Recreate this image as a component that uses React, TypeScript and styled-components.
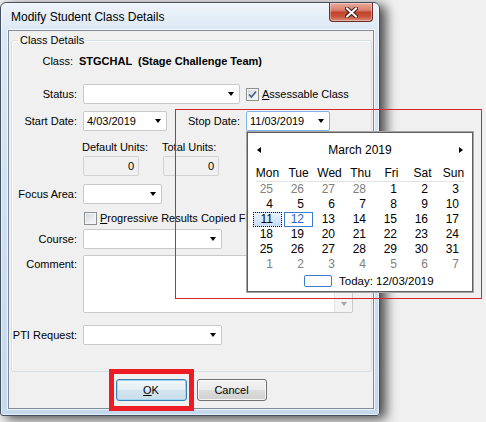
import styled, { createGlobalStyle } from "styled-components";

const GlobalStyle = createGlobalStyle`
  html, body {
    margin: 0;
    padding: 0;
  }
  body {
    width: 486px;
    height: 422px;
    overflow: hidden;
    background: #f0f0f0;
    font-family: "Liberation Sans", Arial, sans-serif;
    font-size: 11px;
    color: #000;
  }
`;

const Desktop = styled.div`
  position: relative;
  width: 486px;
  height: 422px;
  padding-top: 2px;
  box-sizing: border-box;
  overflow: hidden;
  background: #f0f0f0;
`;

const Window = styled.div`
  box-sizing: border-box;
  width: 380px;
  height: 414px;
  display: flex;
  flex-direction: column;
  border: 1px solid #44505e;
  border-radius: 6px 6px 3px 3px;
  background: linear-gradient(180deg, #eef4fa 0%, #dbe7f4 7%, #c5d9ee 100%);
  box-shadow: inset 0 0 0 1px rgba(255, 255, 255, 0.55), 6px 3px 12px rgba(0, 0, 0, 0.7);
`;

const TitleBar = styled.div`
  height: 27px;
  flex: 0 0 27px;
  display: flex;
  justify-content: space-between;
  align-items: flex-start;
`;

const Title = styled.span`
  padding: 6px 0 0 10px;
  line-height: 16px;
  font-size: 12px;
  color: #000;
`;

const CloseButton = styled.div`
  box-sizing: border-box;
  width: 44px;
  height: 19px;
  margin-right: 6px;
  display: flex;
  align-items: center;
  justify-content: center;
  border: 1px solid #6b2e24;
  border-top: none;
  border-radius: 0 0 4px 4px;
  background: linear-gradient(180deg, #e9aa9d 0%, #d8806e 40%, #c2432b 52%, #c8533b 75%, #de8d78 100%);
  box-shadow: inset 0 0 0 1px rgba(255, 255, 255, 0.35);
`;

const Client = styled.div`
  flex: 1;
  margin: 0 5px 6px 7px;
  display: flex;
  flex-direction: column;
  border: 1px solid #7f8c9b;
  background: #f0f0f0;
  box-shadow: 0 0 0 1px rgba(255, 255, 255, 0.7);
`;

const Group = styled.fieldset`
  margin: 2px 1px 0 2px;
  padding: 0 0 26px 0;
  border: 1px solid #d5dfe5;
  border-radius: 3px;
  box-shadow: inset 1px 1px 0 #fff;
  min-width: 0;
`;

const Legend = styled.legend`
  margin-left: 6px;
  padding: 0 2px;
  line-height: 14px;
  font-size: 11px;
`;

const Row = styled.div<{ $mt?: number; $top?: boolean }>`
  display: flex;
  align-items: ${(p) => (p.$top ? "flex-start" : "center")};
  margin-top: ${(p) => p.$mt ?? 0}px;
`;

const Label = styled.span<{ $w?: number; $ml?: number; $pt?: number }>`
  flex: 0 0 ${(p) => p.$w ?? 65}px;
  margin-left: ${(p) => p.$ml ?? 0}px;
  margin-right: 6px;
  padding-top: ${(p) => p.$pt ?? 0}px;
  text-align: right;
  white-space: nowrap;
  line-height: 15px;
`;

const ClassValue = styled.span`
  font-weight: bold;
  white-space: pre;
  line-height: 15px;
`;

const Combo = styled.div<{ $w: number; $focus?: boolean }>`
  box-sizing: border-box;
  width: ${(p) => p.$w}px;
  height: 20px;
  flex: 0 0 auto;
  display: flex;
  align-items: center;
  padding-left: 3px;
  background: #fff;
  border: 1px solid ${(p) => (p.$focus ? "#7eb4ea" : "#c9c9c9")};
  border-radius: 2px;
`;

const ComboText = styled.span`
  flex: 1;
  white-space: nowrap;
`;

const DropArrow = styled.span`
  flex: 0 0 17px;
  display: flex;
  justify-content: center;
  &::before {
    content: "";
    border-left: 3.5px solid transparent;
    border-right: 3.5px solid transparent;
    border-top: 4px solid #000;
  }
`;

const CheckBox = styled.span<{ $ml?: number }>`
  box-sizing: border-box;
  width: 13px;
  height: 13px;
  flex: 0 0 13px;
  margin-left: ${(p) => p.$ml ?? 0}px;
  margin-right: 3px;
  display: flex;
  align-items: center;
  justify-content: center;
  border: 1px solid #8e8f8f;
  background: linear-gradient(135deg, #cfd3d9 0%, #eceef0 60%, #f8f8f8 100%);
  box-shadow: inset 0 0 0 1px #f4f4f4;
`;

const CheckText = styled.span`
  white-space: nowrap;
  line-height: 15px;
`;

const Key = styled.span`
  text-decoration: underline;
`;

const UnitsRow = styled.div`
  display: flex;
  gap: 24px;
  margin-top: 9px;
  padding-left: 71px;
`;

const UnitCol = styled.div<{ $ml?: number }>`
  width: 56px;
  margin-left: ${(p) => p.$ml ?? 0}px;
  display: flex;
  flex-direction: column;
  gap: 1px;
`;

const UnitLabel = styled.span`
  line-height: 15px;
  margin-left: -1px;
  white-space: nowrap;
`;

const ReadOnlyBox = styled.div`
  box-sizing: border-box;
  width: 56px;
  height: 20px;
  padding-right: 4px;
  display: flex;
  align-items: center;
  justify-content: flex-end;
  border: 1px solid #d3d3d3;
  border-radius: 2px;
  background: #f0f0f0;
`;

const Memo = styled.div`
  box-sizing: border-box;
  width: 270px;
  height: 58px;
  display: flex;
  justify-content: flex-end;
  background: #fff;
  border: 1px solid #c9c9c9;
  border-radius: 2px;
`;

const ScrollBar = styled.div`
  width: 17px;
  display: flex;
  flex-direction: column;
  justify-content: space-between;
  background: #f3f3f3;
  border-left: 1px solid #e6e6e6;
`;

const ScrollArrow = styled.span<{ $up?: boolean }>`
  height: 16px;
  display: flex;
  align-items: center;
  justify-content: center;
  &::before {
    content: "";
    border-left: 3.5px solid transparent;
    border-right: 3.5px solid transparent;
    ${(p) => (p.$up ? "border-bottom" : "border-top")}: 4px solid #a3a3a3;
  }
`;

const Buttons = styled.div`
  display: flex;
  justify-content: center;
  gap: 10px;
  margin-top: 7px;
`;

const OkWrap = styled.div`
  position: relative;
  display: flex;
  &::after {
    content: "";
    position: absolute;
    left: -7px;
    right: -7px;
    top: -10px;
    bottom: -10px;
    box-sizing: border-box;
    border: 5px solid #ed1c24;
    pointer-events: none;
  }
`;

const Button = styled.button<{ $w: number; $default?: boolean }>`
  box-sizing: border-box;
  width: ${(p) => p.$w}px;
  height: 22px;
  padding: 0;
  font: inherit;
  font-size: 11px;
  color: #000;
  border: 1px solid ${(p) => (p.$default ? "#3c7fb1" : "#707070")};
  border-radius: 3px;
  background: ${(p) =>
    p.$default
      ? "linear-gradient(180deg, #f2f7fa 0%, #e4eef4 48%, #d3e4ee 52%, #c9dde9 100%)"
      : "linear-gradient(180deg, #f2f2f2 0%, #ebebeb 48%, #dddddd 52%, #cfcfcf 100%)"};
  box-shadow: inset 0 0 0 1px ${(p) => (p.$default ? "#9fd6f5" : "rgba(255,255,255,0.8)")};
`;

/* overlays */

const Annotation = styled.div`
  position: absolute;
  left: 175px;
  top: 109px;
  width: 307px;
  height: 190px;
  box-sizing: border-box;
  border: 1px solid #d9232e;
  pointer-events: none;
`;

const Calendar = styled.div`
  position: absolute;
  left: 247px;
  top: 132px;
  width: 226px;
  height: 160px;
  box-sizing: border-box;
  padding-top: 8px;
  background: #fff;
  border: 1px solid #5e5e5e;
  box-shadow: 0 0 0 1px #a6a6a6;
  font-size: 12px;
`;

const CalHeader = styled.div`
  height: 18px;
  display: flex;
  align-items: center;
  justify-content: space-between;
  padding: 0 9px;
`;

const NavArrow = styled.span<{ $right?: boolean }>`
  width: 0;
  height: 0;
  border-top: 3.5px solid transparent;
  border-bottom: 3.5px solid transparent;
  ${(p) => (p.$right ? "border-left" : "border-right")}: 4px solid #000;
`;

const Month = styled.span`
  line-height: 18px;
`;

const CalGrid = styled.div<{ $mt?: number }>`
  display: grid;
  grid-template-columns: repeat(7, 31px);
  margin: ${(p) => p.$mt ?? 0}px 4px 0 4px;
`;

const WeekDay = styled.div`
  height: 16px;
  line-height: 16px;
  text-align: center;
`;

const Divider = styled.div`
  height: 1px;
  margin: 0 8px 0 8px;
  background: #e3e3e3;
`;

const DayCell = styled.div<{ $muted?: boolean; $selected?: boolean; $today?: boolean }>`
  box-sizing: border-box;
  height: 15px;
  margin: 0 1px;
  padding-right: 8px;
  line-height: 13px;
  text-align: right;
  border: 1px ${(p) => (p.$selected ? "dotted #000" : p.$today ? "solid #3d7dcf" : "solid transparent")};
  color: ${(p) => (p.$muted ? "#808080" : p.$today ? "#2c66c8" : "#000")};
  background: ${(p) => (p.$selected ? "linear-gradient(180deg, #eaf3fd 0%, #c5dcf8 100%)" : "transparent")};
`;

const TodayRow = styled.div`
  display: flex;
  align-items: center;
  gap: 7px;
  height: 15px;
  margin-top: 1px;
  padding-left: 56px;
  font-size: 11.5px;
`;

const TodayBox = styled.span`
  box-sizing: border-box;
  width: 28px;
  height: 12px;
  border: 1px solid #3a7dd0;
  border-radius: 2px;
`;

const weekDays = ["Mon", "Tue", "Wed", "Thu", "Fri", "Sat", "Sun"];

type Day = { n: number; muted?: boolean };

const days: Day[] = [
  ...[25, 26, 27, 28].map((n) => ({ n, muted: true })),
  ...Array.from({ length: 31 }, (_, i) => ({ n: i + 1 })),
  ...Array.from({ length: 7 }, (_, i) => ({ n: i + 1, muted: true })),
];

const CloseGlyph = () => (
  <svg width="13" height="11" viewBox="0 0 13 11">
    <path d="M2 1.5 L11 9.5 M11 1.5 L2 9.5" stroke="#3b1c17" strokeWidth="4" strokeLinecap="square" />
    <path d="M2 1.5 L11 9.5 M11 1.5 L2 9.5" stroke="#fff" strokeWidth="2" strokeLinecap="square" />
  </svg>
);

const Tick = () => (
  <svg width="9" height="9" viewBox="0 0 9 9">
    <path d="M1 4.5 L3.5 7 L8 1.5" fill="none" stroke="#4a5e8c" strokeWidth="1.7" />
  </svg>
);

const App = () => {
  return (
    <Desktop>
      <GlobalStyle />
      <Window>
        <TitleBar>
          <Title>Modify Student Class Details</Title>
          <CloseButton>
            <CloseGlyph />
          </CloseButton>
        </TitleBar>
        <Client>
          <Group>
            <Legend>Class Details</Legend>
            <Row $mt={7}>
              <Label $w={61}>Class:</Label>
              <ClassValue>STGCHAL  (Stage Challenge Team)</ClassValue>
            </Row>
            <Row $mt={15}>
              <Label>Status:</Label>
              <Combo $w={157}>
                <ComboText />
                <DropArrow />
              </Combo>
              <CheckBox $ml={6}>
                <Tick />
              </CheckBox>
              <CheckText>
                <Key>A</Key>ssessable Class
              </CheckText>
            </Row>
            <Row $mt={7}>
              <Label>Start Date:</Label>
              <Combo $w={84}>
                <ComboText>4/03/2019</ComboText>
                <DropArrow />
              </Combo>
              <Label $w={58} $ml={15}>
                Stop Date:
              </Label>
              <Combo $w={84} $focus>
                <ComboText>11/03/2019</ComboText>
                <DropArrow />
              </Combo>
            </Row>
            <UnitsRow>
              <UnitCol>
                <UnitLabel>Default Units:</UnitLabel>
                <ReadOnlyBox>0</ReadOnlyBox>
              </UnitCol>
              <UnitCol>
                <UnitLabel>Total Units:</UnitLabel>
                <ReadOnlyBox>0</ReadOnlyBox>
              </UnitCol>
              <UnitCol $ml={4}>
                <UnitLabel>Actual Units:</UnitLabel>
                <ReadOnlyBox>0</ReadOnlyBox>
              </UnitCol>
            </UnitsRow>
            <Row $mt={8}>
              <Label>Focus Area:</Label>
              <Combo $w={79}>
                <ComboText />
                <DropArrow />
              </Combo>
            </Row>
            <Row $mt={7}>
              <CheckBox $ml={72} />
              <CheckText>
                <Key>P</Key>rogressive Results Copied From
              </CheckText>
            </Row>
            <Row $mt={3}>
              <Label>Course:</Label>
              <Combo $w={139}>
                <ComboText />
                <DropArrow />
              </Combo>
            </Row>
            <Row $mt={6} $top>
              <Label $pt={2}>Comment:</Label>
              <Memo>
                <ScrollBar>
                  <ScrollArrow $up />
                  <ScrollArrow />
                </ScrollBar>
              </Memo>
            </Row>
            <Row $mt={12}>
              <Label>PTI Request:</Label>
              <Combo $w={139}>
                <ComboText />
                <DropArrow />
              </Combo>
            </Row>
          </Group>
          <Buttons>
            <OkWrap>
              <Button $w={71} $default>
                <Key>O</Key>K
              </Button>
            </OkWrap>
            <Button $w={70}>Cancel</Button>
          </Buttons>
        </Client>
      </Window>

      <Calendar>
        <CalHeader>
          <NavArrow />
          <Month>March 2019</Month>
          <NavArrow $right />
        </CalHeader>
        <CalGrid $mt={6}>
          {weekDays.map((d) => (
            <WeekDay key={d}>{d}</WeekDay>
          ))}
        </CalGrid>
        <Divider />
        <CalGrid>
          {days.map((d, i) => (
            <DayCell key={i} $muted={d.muted} $selected={!d.muted && d.n === 11} $today={!d.muted && d.n === 12}>
              {d.n}
            </DayCell>
          ))}
        </CalGrid>
        <TodayRow>
          <TodayBox />
          <span>Today: 12/03/2019</span>
        </TodayRow>
      </Calendar>

      <Annotation />
    </Desktop>
  );
};

export default App;
